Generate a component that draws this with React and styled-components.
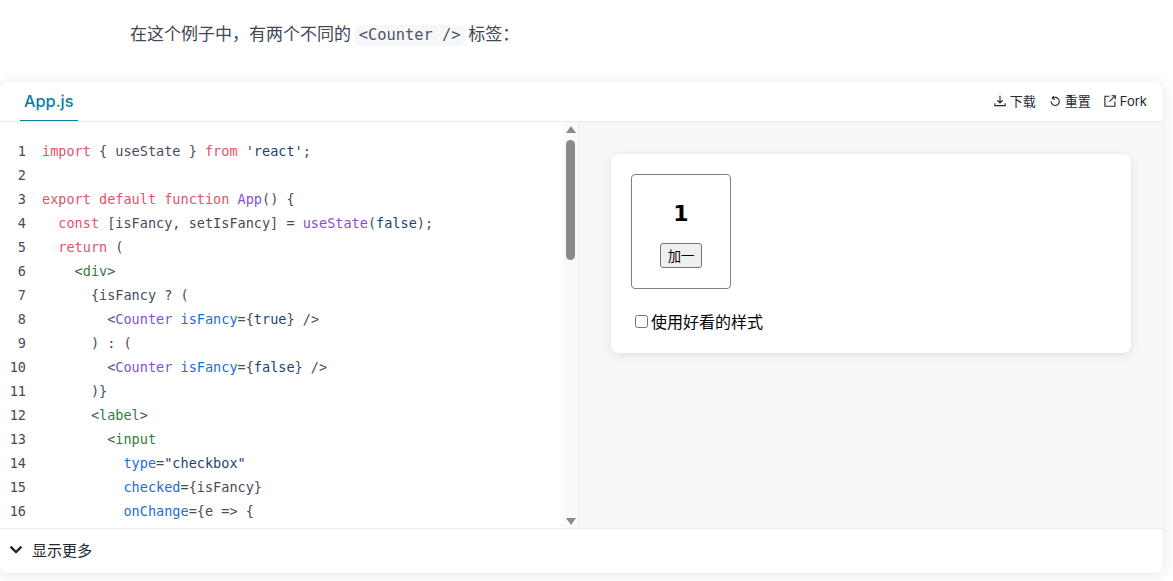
import React from "react";
import styled, { createGlobalStyle } from "styled-components";

const GlobalStyle = createGlobalStyle`
  html, body {
    margin: 0;
    padding: 0;
    background: #fff;
    overflow: hidden;
  }
  * {
    box-sizing: border-box;
  }
`;

const tokenColors = {
  plain: "#454c5b",
  keyword: "#e4526a",
  fn: "#8250d6",
  str: "#1f3f72",
  tag: "#2e7d3c",
  attr: "#1a6fd0",
};

const code = [
  [["keyword", "import"], ["plain", " { useState } "], ["keyword", "from"], ["str", " 'react'"], ["plain", ";"]],
  [],
  [["keyword", "export default function "], ["fn", "App"], ["plain", "() {"]],
  [["plain", "  "], ["keyword", "const"], ["plain", " [isFancy, setIsFancy] = "], ["fn", "useState"], ["plain", "("], ["str", "false"], ["plain", ");"]],
  [["plain", "  "], ["keyword", "return"], ["plain", " ("]],
  [["plain", "    <"], ["tag", "div"], ["plain", ">"]],
  [["plain", "      {isFancy ? ("]],
  [["plain", "        <"], ["fn", "Counter"], ["plain", " "], ["attr", "isFancy"], ["plain", "={"], ["str", "true"], ["plain", "} />"]],
  [["plain", "      ) : ("]],
  [["plain", "        <"], ["fn", "Counter"], ["plain", " "], ["attr", "isFancy"], ["plain", "={"], ["str", "false"], ["plain", "} />"]],
  [["plain", "      )}"]],
  [["plain", "      <"], ["tag", "label"], ["plain", ">"]],
  [["plain", "        <"], ["tag", "input"]],
  [["plain", "          "], ["attr", "type"], ["plain", "="], ["str", '"checkbox"']],
  [["plain", "          "], ["attr", "checked"], ["plain", "={isFancy}"]],
  [["plain", "          "], ["attr", "onChange"], ["plain", "={e => {"]],
];

function App() {
  return (
    <Page>
      <GlobalStyle />
      <Intro>
        在这个例子中，有两个不同的 <InlineCode>&lt;Counter /&gt;</InlineCode> 标签：
      </Intro>
      <Sandbox>
        <TabBar>
          <Tab>App.js</Tab>
          <Actions>
            <Action>
              <Icon viewBox="0 0 12 12">
                <path d="M6 .8v7M3.2 5.2 6 8l2.8-2.8M.8 8.2v2.4h10.4V8.2" />
              </Icon>
              下载
            </Action>
            <Action>
              <Icon viewBox="0 0 12 12">
                <path d="M3.6 3.2a4.1 4.1 0 1 1-1.5 3" />
                <path d="M4.6.9 3.3 3.4l2.6 1" />
              </Icon>
              重置
            </Action>
            <Action>
              <Icon viewBox="0 0 12 12">
                <path d="M5.4 1.2H.9v10h10V6.6M7.6.7h3.7v3.7M11.1.9 5.4 6.6" />
              </Icon>
              Fork
            </Action>
          </Actions>
        </TabBar>
        <Body>
          <CodePane>
            <CodeLines>
              {code.map((line, i) => (
                <CodeLine key={i}>
                  <LineNumber>{i + 1}</LineNumber>
                  <LineText>
                    {line.map(([kind, text], j) => (
                      <Token key={j} $kind={kind}>
                        {text}
                      </Token>
                    ))}
                  </LineText>
                </CodeLine>
              ))}
            </CodeLines>
            <ScrollTrack>
              <ArrowUp />
              <ScrollThumb />
              <ArrowDown />
            </ScrollTrack>
          </CodePane>
          <Preview>
            <PreviewCard>
              <Counter>
                <Count>1</Count>
                <AddButton>加一</AddButton>
              </Counter>
              <FancyLabel>
                <input type="checkbox" />
                使用好看的样式
              </FancyLabel>
            </PreviewCard>
          </Preview>
        </Body>
        <Footer>
          <Chevron viewBox="0 0 14 9">
            <path d="M1.6 1.6 7 7l5.4-5.4" />
          </Chevron>
          显示更多
        </Footer>
      </Sandbox>
    </Page>
  );
}

const sansStack = `"Inter", "Noto Sans CJK SC", sans-serif`;
const monoStack = `"DejaVu Sans Mono", monospace`;

const Page = styled.div`
  width: 100%;
  height: 581px;
  font-family: ${sansStack};
  color: #23272f;
`;

const Intro = styled.p`
  margin: 0;
  height: 82px;
  padding: 20px 0 0 130px;
  font-size: 17px;
  line-height: 28px;
  word-spacing: -1.1px;
  color: #404756;
`;

const InlineCode = styled.code`
  display: inline-block;
  height: 21px;
  padding: 0 4px;
  border-radius: 6px;
  background: #f6f7f9;
  font-family: ${monoStack};
  font-size: 15.4px;
  line-height: 21px;
  word-spacing: 0;
  color: #4d5464;
  vertical-align: baseline;
`;

const Sandbox = styled.section`
  display: flex;
  flex-direction: column;
  width: 1163px;
  height: 491px;
  border-radius: 8px;
  background: #fff;
  box-shadow: 0 2px 16px rgba(0, 0, 0, 0.1), 0 0 2px rgba(0, 0, 0, 0.03);
  overflow: hidden;
`;

const TabBar = styled.header`
  display: flex;
  align-items: stretch;
  justify-content: space-between;
  flex: 0 0 40px;
  padding: 0 16px 0 20px;
  border-bottom: 1px solid #e9ebef;
`;

const Tab = styled.div`
  display: flex;
  align-items: center;
  width: 58px;
  height: 39px;
  padding: 0 4px;
  border-bottom: 1px solid #087ea4;
  font-size: 16.3px;
  font-weight: 500;
  color: #087ea4;
`;

const Actions = styled.div`
  display: flex;
  align-items: center;
  gap: 13px;
`;

const Action = styled.span`
  display: inline-flex;
  align-items: center;
  gap: 4px;
  height: 20px;
  margin-top: -1px;
  font-size: 13px;
  line-height: 20px;
  color: #23272f;
`;

const Icon = styled.svg`
  width: 12px;
  height: 12px;
  fill: none;
  stroke: #23272f;
  stroke-width: 1.1;
`;

const Body = styled.div`
  display: flex;
  flex: 1;
  min-height: 0;
`;

const CodePane = styled.div`
  display: flex;
  flex: 0 0 579px;
  border-right: 1px solid #e9ebef;
  overflow: hidden;
`;

const CodeLines = styled.div`
  flex: 1;
  padding-top: 17px;
  font-family: ${monoStack};
  font-size: 13.54px;
  line-height: 24px;
`;

const CodeLine = styled.div`
  display: flex;
  height: 24px;
`;

const LineNumber = styled.span`
  flex: 0 0 26px;
  margin-right: 16px;
  text-align: right;
  color: #454c5b;
`;

const LineText = styled.span`
  white-space: pre;
`;

const Token = styled.span`
  color: ${(p) => tokenColors[p.$kind]};
`;

const ScrollTrack = styled.div`
  display: flex;
  flex: 0 0 15px;
  flex-direction: column;
  align-items: center;
  padding: 4px 0 3px;
  background: #fafafa;
`;

const ArrowUp = styled.div`
  width: 0;
  height: 0;
  border-left: 5px solid transparent;
  border-right: 5px solid transparent;
  border-bottom: 7px solid #8a8a8a;
`;

const ArrowDown = styled(ArrowUp)`
  margin-top: auto;
  border-bottom: 0;
  border-top: 7px solid #8a8a8a;
`;

const ScrollThumb = styled.div`
  width: 9px;
  height: 120px;
  margin-top: 7px;
  border-radius: 5px;
  background: #8a8a8a;
`;

const Preview = styled.div`
  flex: 1;
  padding: 32px;
  background: #f6f7f9;
`;

const PreviewCard = styled.div`
  height: 199px;
  padding: 20px;
  border-radius: 8px;
  background: #fff;
  color: #000;
  box-shadow: 0 2px 8px rgba(0, 0, 0, 0.1);
`;

const Counter = styled.div`
  display: flex;
  flex-direction: column;
  align-items: center;
  width: 100px;
  height: 115px;
  padding-top: 25px;
  border: 1px solid #808080;
  border-radius: 4px;
`;

const Count = styled.div`
  height: 28px;
  font-family: "DejaVu Sans", sans-serif;
  font-size: 22px;
  font-weight: 700;
  line-height: 28px;
`;

const AddButton = styled.button`
  width: 42px;
  height: 25px;
  margin-top: 15px;
  padding: 0;
  border: 1px solid #767676;
  border-radius: 3px;
  background: #efefef;
  font-family: ${sansStack};
  font-size: 13.33px;
  color: #000;
`;

const FancyLabel = styled.label`
  display: flex;
  align-items: center;
  height: 24px;
  margin-top: 20px;
  padding-left: 4px;
  font-size: 16px;
  color: #000;

  input {
    width: 13px;
    height: 13px;
    margin: 1px 3px 0 0;
  }
`;

const Footer = styled.div`
  display: flex;
  align-items: center;
  flex: 0 0 45px;
  padding-left: 9px;
  padding-bottom: 3px;
  border-top: 1px solid #e9ebef;
  font-size: 15px;
  color: #23272f;
`;

const Chevron = styled.svg`
  width: 14px;
  height: 9px;
  margin-right: 9px;
  fill: none;
  stroke: #23272f;
  stroke-width: 2.4;
`;

export default App;
